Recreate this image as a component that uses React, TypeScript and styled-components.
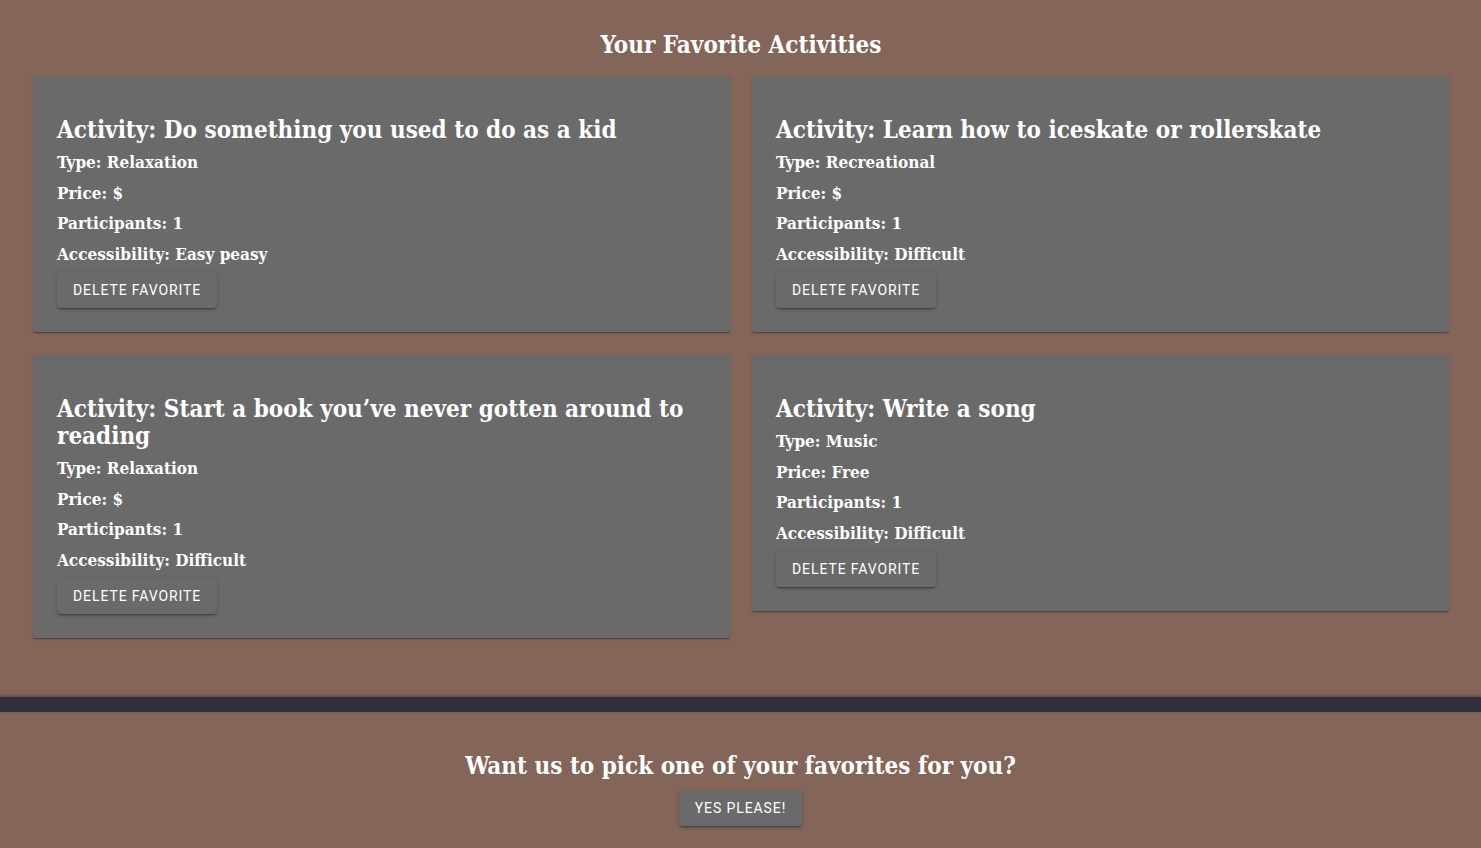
import React, { FC } from 'react'
import styled, { createGlobalStyle } from 'styled-components'

const GlobalStyle = createGlobalStyle`
    body {
        margin: 0;
        background: #836559;
        font-family: "DejaVu Serif Condensed", "DejaVu Serif", serif;
        color: #fff;
    }
`

const favorites = [
    { activity: 'Do something you used to do as a kid', type: 'Relaxation', price: '$', participants: 1, accessibility: 'Easy peasy' },
    { activity: 'Learn how to iceskate or rollerskate', type: 'Recreational', price: '$', participants: 1, accessibility: 'Difficult' },
    { activity: 'Start a book you\u2019ve never gotten around to reading', type: 'Relaxation', price: '$', participants: 1, accessibility: 'Difficult' },
    { activity: 'Write a song', type: 'Music', price: 'Free', participants: 1, accessibility: 'Difficult' },
]

const Page = styled.div`
    min-height: 848px;
    display: flex;
    flex-direction: column;
`
const TopSection = styled.section`
    padding: 29px 32px 59px 33px;
`
const Title = styled.h2`
    margin: 0 0 15px;
    text-align: center;
    font-size: 24px;
    line-height: 32px;
    font-weight: bold;
`
const CardGrid = styled.div`
    display: grid;
    grid-template-columns: 1fr 1fr;
    column-gap: 22px;
    row-gap: 23px;
    align-items: start;
`
const Card = styled.div`
    background: #6a6a6a;
    border-radius: 2px;
    padding: 40px 24px 24px;
    box-shadow: 0 2px 1px -1px rgba(0, 0, 0, 0.2), 0 1px 1px 0 rgba(0, 0, 0, 0.14), 0 1px 3px 0 rgba(0, 0, 0, 0.12);
`
const CardTitle = styled.h3`
    margin: 0 0 4px;
    font-size: 24px;
    line-height: 27px;
    font-weight: bold;
`
const Detail = styled.p`
    margin: 0;
    font-size: 17px;
    line-height: 30.5px;
    font-weight: bold;
`
const Button = styled.button<{ $top?: number }>`
    display: block;
    height: 36px;
    margin-top: ${p => p.$top ?? 3}px;
    background: #6a6a6a;
    color: #fff;
    border: none;
    border-radius: 4px;
    padding: 6px 16px;
    font-family: Roboto, "Liberation Sans", sans-serif;
    font-weight: 400;
    font-size: 14px;
    line-height: 24px;
    letter-spacing: 0.9px;
    text-transform: uppercase;
    cursor: pointer;
    box-shadow: 0 3px 1px -2px rgba(0, 0, 0, 0.2), 0 2px 2px 0 rgba(0, 0, 0, 0.14), 0 1px 5px 0 rgba(0, 0, 0, 0.12);
`
const Divider = styled.div`
    height: 15px;
    background: #32303f;
    box-shadow: 0 -1px 3px rgba(0, 0, 0, 0.3);
`
const BottomSection = styled.section`
    display: flex;
    flex-direction: column;
    align-items: center;
    padding: 37px 0 24px;
`
const Question = styled.h2`
    margin: 0;
    font-size: 24px;
    line-height: 34px;
    font-weight: bold;
`

const App: FC = () => {
    return (
        <Page>
            <GlobalStyle />
            <TopSection>
                <Title>Your Favorite Activities</Title>
                <CardGrid>
                    {favorites.map(item => (
                        <Card key={item.activity}>
                            <CardTitle>Activity: {item.activity}</CardTitle>
                            <Detail>Type: {item.type}</Detail>
                            <Detail>Price: {item.price}</Detail>
                            <Detail>Participants: {item.participants}</Detail>
                            <Detail>Accessibility: {item.accessibility}</Detail>
                            <Button>Delete Favorite</Button>
                        </Card>
                    ))}
                </CardGrid>
            </TopSection>
            <Divider />
            <BottomSection>
                <Question>Want us to pick one of your favorites for you?</Question>
                <Button $top={7}>Yes Please!</Button>
            </BottomSection>
        </Page>
    )
}

export default App
